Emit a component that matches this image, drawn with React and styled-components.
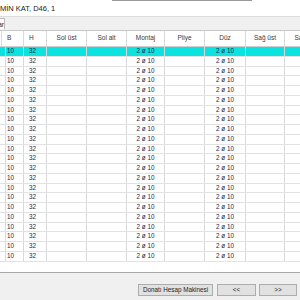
import React from "react";
import styled, { createGlobalStyle } from "styled-components";

const Global = createGlobalStyle`
  html, body { margin: 0; padding: 0; background: #ffffff; }
  body { font-family: "Liberation Sans", Arial, sans-serif; }
`;

const COLS = "2px 22px 23px 40px 40px 38px 40px 41px 39px 40px";

const Window = styled.div`
  width: 300px;
  height: 300px;
  overflow: hidden;
  display: flex;
  flex-direction: column;
  background: #ffffff;
`;

const TitleBar = styled.div`
  position: relative;
  height: 17px;
  flex: none;
  display: flex;
  align-items: center;
  background: #ffffff;
  border-bottom: 1px solid #dcdcdc;
  box-sizing: border-box;
  &::before {
    content: "";
    position: absolute;
    left: 112px;
    top: 0;
    width: 140px;
    height: 1px;
    background: #9a9a9a;
  }
`;

const TitleText = styled.span`
  font-size: 7.5px;
  color: #1a1a1a;
  padding-top: 1px;
  white-space: nowrap;
`;

const Toolbar = styled.div`
  height: 14px;
  flex: none;
  display: flex;
  align-items: flex-end;
  background: #f0f0f0;
  border-bottom: 1px solid #c8c8c8;
  box-sizing: border-box;
`;

const Tab = styled.div`
  height: 10px;
  width: 4px;
  overflow: hidden;
  display: flex;
  align-items: center;
  justify-content: flex-end;
  background: #ffffff;
  border: 1px solid #b8b8b8;
  border-left: none;
  border-bottom: none;
  font-size: 6.5px;
  color: #222;
  margin-bottom: 1px;
`;

const Grid = styled.div`
  flex: 1;
  overflow: hidden;
  background: #ffffff;
  display: flex;
  flex-direction: column;
`;

const Row = styled.div`
  display: grid;
  grid-template-columns: ${COLS};
  height: ${(p) => (p.$header ? "16px" : "9.75px")};
  flex: none;
  background: ${(p) => (p.$selected ? "#0ce3e1" : "#ffffff")};
  box-sizing: border-box;
  border-bottom: 1px solid ${(p) => (p.$header ? "#cfcfcf" : "#e2e2e2")};
`;

const Cell = styled.div`
  box-sizing: border-box;
  border-right: 1px solid #d9d9d9;
  display: flex;
  align-items: center;
  justify-content: ${(p) => (p.$align === "left" ? "flex-start" : "center")};
  padding-left: ${(p) => (p.$align === "left" ? "5px" : "0")};
  font-size: ${(p) => (p.$header ? "6.5px" : "6.3px")};
  color: ${(p) => (p.$header ? "#3a3a3a" : "#1d2a44")};
  white-space: nowrap;
  overflow: hidden;
  line-height: 1;
`;

const Footer = styled.div`
  height: 28px;
  flex: none;
  background: #f0f0f0;
  border-top: 1px solid #a8a8a8;
  box-sizing: border-box;
  display: flex;
  justify-content: flex-end;
  align-items: flex-start;
  padding-top: 11px;
  padding-right: 3px;
  gap: 3px;
`;

const Button = styled.button`
  height: 12px;
  width: ${(p) => p.$w}px;
  margin-right: ${(p) => p.$mr || 0}px;
  padding: 0;
  background: #e1e1e1;
  border: 1px solid #adadad;
  font-family: "Liberation Sans", Arial, sans-serif;
  font-size: 6.3px;
  color: #222;
  display: flex;
  align-items: center;
  justify-content: center;
  line-height: 1;
`;

const headers = ["", "B", "H", "Sol üst", "Sol alt", "Montaj", "Pilye", "Düz", "Sağ üst", "Sağ alt"];
const align = ["left", "left", "left", "c", "c", "c", "c", "c", "c", "c"];
const rowValues = ["", "10", "32", "", "", "2 ø 10", "", "2 ø 10", "", ""];

export default function App() {
  const rows = Array.from({ length: 22 }, (_, i) => i);
  return (
    <Window>
      <Global />
      <TitleBar>
        <TitleText>MİN KAT, D46, 1</TitleText>
      </TitleBar>
      <Toolbar>
        <Tab>ar</Tab>
      </Toolbar>
      <Grid>
        <Row $header>
          {headers.map((h, i) => (
            <Cell key={i} $header $align={i === 1 || i === 2 ? "left" : "c"}>
              {h}
            </Cell>
          ))}
        </Row>
        {rows.map((r) => (
          <Row key={r} $selected={r === 0}>
            {rowValues.map((v, i) => (
              <Cell key={i} $align={align[i]}>
                {v}
              </Cell>
            ))}
          </Row>
        ))}
      </Grid>
      <Footer>
        <Button $w={75} $mr={1}>Donatı Hesap Makinesi</Button>
        <Button $w={39}>&lt;&lt;</Button>
        <Button $w={38}>&gt;&gt;</Button>
      </Footer>
    </Window>
  );
}
